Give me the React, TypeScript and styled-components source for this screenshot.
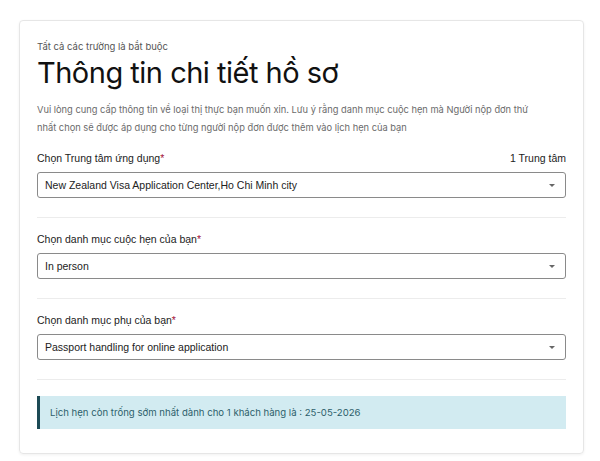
import styled, { createGlobalStyle } from "styled-components";

const GlobalStyle = createGlobalStyle`
  body {
    margin: 0;
    background: #ffffff;
    font-family: Inter, "Noto Sans", sans-serif;
  }
`;

const Page = styled.div`
  padding: 20px 16px 6px 19px;
`;

const Card = styled.div`
  border: 1px solid #e6e6e6;
  border-radius: 4px;
  box-shadow: 0 1px 3px rgba(0, 0, 0, 0.06);
  padding: 19px 17px 24px 17px;
`;

const Note = styled.div`
  font-size: 9.5px;
  color: #555;
  line-height: 14px;
`;

const Title = styled.h1`
  margin: 0;
  font-size: 29px;
  font-weight: 400;
  color: #111;
  line-height: 38px;
  letter-spacing: -0.5px;
`;

const Description = styled.p`
  margin: 9px 0 0;
  font-size: 9.3px;
  line-height: 18px;
  color: #6b6b6b;
`;

const Field = styled.div`
  padding: 13px 0 19px;
  border-bottom: 1px solid #ececec;
`;

const LabelRow = styled.div`
  display: flex;
  justify-content: space-between;
  align-items: center;
  font-family: "Liberation Sans", Arial, sans-serif;
  font-size: 10.5px;
  color: #222;
  line-height: 16px;
  margin-bottom: 6px;
`;

const Required = styled.span`
  color: #a3123a;
`;

const Select = styled.div`
  box-sizing: border-box;
  display: flex;
  align-items: center;
  justify-content: space-between;
  height: 26px;
  padding: 0 10px 0 7px;
  border: 1px solid #8a8a8a;
  border-radius: 3px;
  font-family: "Liberation Sans", Arial, sans-serif;
  font-size: 10.5px;
  color: #222;
`;

const Caret = styled.span`
  width: 0;
  height: 0;
  border-left: 3px solid transparent;
  border-right: 3px solid transparent;
  border-top: 3px solid #666;
`;

const Alert = styled.div`
  margin-top: 16px;
  background: #d2ebf1;
  border-left: 3px solid #1c4a55;
  padding: 0 10px;
  height: 33px;
  display: flex;
  align-items: center;
  font-size: 9.6px;
  color: #2d5f6b;
`;

const fields = [
  { label: "Chọn Trung tâm ứng dụng", extra: "1 Trung tâm", value: "New Zealand Visa Application Center,Ho Chi Minh city" },
  { label: "Chọn danh mục cuộc hẹn của bạn", value: "In person" },
  { label: "Chọn danh mục phụ của bạn", value: "Passport handling for online application" },
];

const App = () => {
  return (
    <Page>
      <GlobalStyle />
      <Card>
        <Note>Tất cả các trường là bắt buộc</Note>
        <Title>Thông tin chi tiết hồ sơ</Title>
        <Description>
          Vui lòng cung cấp thông tin về loại thị thực bạn muốn xin. Lưu ý rằng danh mục cuộc hẹn mà Người nộp đơn thứ
          <br />
          nhất chọn sẽ được áp dụng cho từng người nộp đơn được thêm vào lịch hẹn của bạn
        </Description>
        {fields.map((f) => (
          <Field key={f.label}>
            <LabelRow>
              <span>
                {f.label}
                <Required>*</Required>
              </span>
              {f.extra && <span>{f.extra}</span>}
            </LabelRow>
            <Select>
              <span>{f.value}</span>
              <Caret />
            </Select>
          </Field>
        ))}
        <Alert>Lịch hẹn còn trống sớm nhất dành cho 1 khách hàng là : 25-05-2026</Alert>
      </Card>
    </Page>
  );
};

export default App;
